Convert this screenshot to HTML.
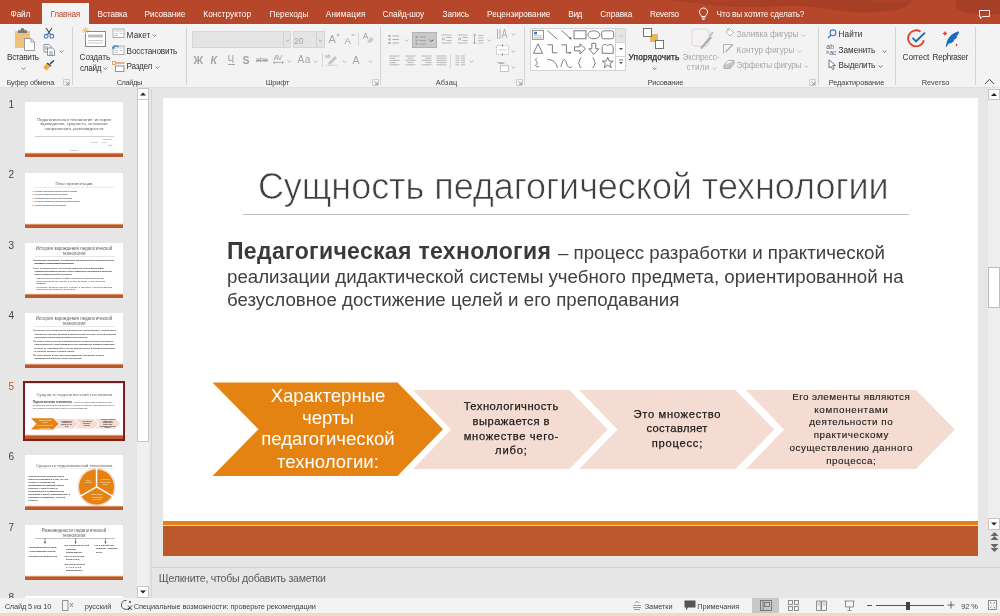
<!DOCTYPE html>
<html><head><meta charset="utf-8">
<style>
*{margin:0;padding:0;box-sizing:border-box}
html,body{width:1000px;height:616px;overflow:hidden;background:#E6E6E6;font-family:"Liberation Sans",sans-serif}
.a{position:absolute}
.t{position:absolute;white-space:nowrap;line-height:1}
#tabs{left:0;top:0;width:1000px;height:24px;background:#B7472A}
.tab{position:absolute;top:9px;font-size:8.6px;color:#fff;white-space:nowrap;line-height:1}
#rib{left:0;top:24px;width:1000px;height:63px;background:#F3F3F3}
.sep{position:absolute;width:1px;background:#D5D5D5}
.lbl{position:absolute;top:54px;font-size:8.6px;color:#444;white-space:nowrap;line-height:1}
.rt{position:absolute;font-size:8.6px;color:#333;white-space:nowrap;line-height:1}
.dis{color:#A6A6A6}
/* slide */
.slide{position:absolute;width:815px;height:459px;background:#fff;overflow:hidden}
.st{position:absolute;white-space:nowrap;line-height:1}
.thumb .sm{-webkit-text-stroke:0.8px currentColor}

</style></head><body><div id="root" style="position:absolute;left:0;top:0;width:1000px;height:616px;overflow:hidden;will-change:transform">
<div class="a" style="left:0;top:0;width:1000px;height:24px;background:#B7472A"></div>
<svg class="a" style="left:0;top:0" width="1000" height="24"><g fill="#9A3A23" opacity="0.55">
<path d="M668,0 H912 C911,8 893,12.5 862,12.5 C842,12.5 826,8 808,6.5 C790,5 770,7.5 745,7 C722,6.5 700,4 668,0 Z"/>
<path d="M957,0 H1000 V14.5 C990,13.5 975,14.5 965,12.5 C956,10 954,4 957,0 Z"/>
</g><path d="M870,0 C875,3 890,4 905,0 Z M708,0 C712,3 725,4 733,0 Z" fill="#B7472A" opacity="0.5"/></svg>
<div class="a" style="left:42px;top:3px;width:47px;height:21px;background:#F3F3F3"></div>
<svg class="a" style="left:698px;top:7px" width="11" height="13" viewBox="0 0 11 13"><path d="M5.5,1 C3,1 1.5,3 1.5,5 C1.5,7 3.2,8 3.5,9.5 L7.5,9.5 C7.8,8 9.5,7 9.5,5 C9.5,3 8,1 5.5,1 Z M3.8,11 L7.2,11 M4.3,12.3 L6.7,12.3" fill="none" stroke="#fff" stroke-width="1"/></svg>

<svg class="a" style="left:978px;top:8.5px" width="13" height="11" viewBox="0 0 13 11"><path d="M1.5,1.5 H11.5 V7.5 H4.5 L2.5,9.8 V7.5 H1.5 Z" fill="none" stroke="#fff" stroke-width="0.9"/></svg>
<div class="a" style="left:0;top:24px;width:1000px;height:63px;background:#F3F3F3"></div>
<div class="a" style="left:0;top:87px;width:1000px;height:1px;background:#E0E0E0"></div>
<div class="a" style="left:72px;top:27px;width:1px;height:58px;background:#D4D4D4"></div>
<div class="a" style="left:186px;top:27px;width:1px;height:58px;background:#D4D4D4"></div>
<div class="a" style="left:380px;top:27px;width:1px;height:58px;background:#D4D4D4"></div>
<div class="a" style="left:524px;top:27px;width:1px;height:58px;background:#D4D4D4"></div>
<div class="a" style="left:818px;top:27px;width:1px;height:58px;background:#D4D4D4"></div>
<div class="a" style="left:895px;top:27px;width:1px;height:58px;background:#D4D4D4"></div>
<div class="a" style="left:975px;top:27px;width:1px;height:58px;background:#D4D4D4"></div>
<svg class="a" style="left:63px;top:79px" width="7" height="7" viewBox="0 0 7 7"><path d="M0.5,0.5 H6.5 V6.5 H0.5 Z" fill="none" stroke="#C4C4C4" stroke-width="0.8"/><path d="M2.5,2.5 L5.5,5.5 M5.5,3 V5.5 H3" fill="none" stroke="#A0A0A0" stroke-width="0.9"/></svg>
<svg class="a" style="left:372px;top:79px" width="7" height="7" viewBox="0 0 7 7"><path d="M0.5,0.5 H6.5 V6.5 H0.5 Z" fill="none" stroke="#C4C4C4" stroke-width="0.8"/><path d="M2.5,2.5 L5.5,5.5 M5.5,3 V5.5 H3" fill="none" stroke="#A0A0A0" stroke-width="0.9"/></svg>
<svg class="a" style="left:516px;top:79px" width="7" height="7" viewBox="0 0 7 7"><path d="M0.5,0.5 H6.5 V6.5 H0.5 Z" fill="none" stroke="#C4C4C4" stroke-width="0.8"/><path d="M2.5,2.5 L5.5,5.5 M5.5,3 V5.5 H3" fill="none" stroke="#A0A0A0" stroke-width="0.9"/></svg>
<svg class="a" style="left:809px;top:79px" width="7" height="7" viewBox="0 0 7 7"><path d="M0.5,0.5 H6.5 V6.5 H0.5 Z" fill="none" stroke="#C4C4C4" stroke-width="0.8"/><path d="M2.5,2.5 L5.5,5.5 M5.5,3 V5.5 H3" fill="none" stroke="#A0A0A0" stroke-width="0.9"/></svg>
<svg class="a" style="left:14px;top:28px" width="22" height="23" viewBox="0 0 22 23">
<rect x="1" y="3" width="15" height="17" rx="1" fill="#EBC47A"/>
<path d="M4,5 V2.2 H6.5 C6.5,0.8 7.2,0.3 8.5,0.3 C9.8,0.3 10.5,0.8 10.5,2.2 H13 V5 Z" fill="#767676"/>
<path d="M10.5,10.5 H17 L20.5,14 V22.5 H10.5 Z" fill="#fff" stroke="#888" stroke-width="0.8"/>
<path d="M17,10.5 V14 H20.5" fill="none" stroke="#888" stroke-width="0.8"/>
</svg>
<svg class="a" style="left:20.5px;top:66.5px" width="5" height="3" viewBox="0 0 5 3"><path d="M0.6,0.6 L2.5,2.4 L4.4,0.6" fill="none" stroke="#666" stroke-width="0.8"/></svg>
<svg class="a" style="left:43px;top:27px" width="12" height="12" viewBox="0 0 12 12">
<path d="M3,1 L7.5,7.5 M9,1 L4.5,7.5" stroke="#444" stroke-width="1.1"/>
<circle cx="3.2" cy="9.3" r="1.9" fill="none" stroke="#3C7CC4" stroke-width="1.1"/><circle cx="8.8" cy="9.3" r="1.9" fill="none" stroke="#3C7CC4" stroke-width="1.1"/>
</svg>
<svg class="a" style="left:43px;top:44px" width="13" height="12" viewBox="0 0 13 12">
<path d="M1,0.5 H6 L8,2.5 V8 H1 Z" fill="#fff" stroke="#777" stroke-width="0.8"/>
<path d="M4.5,4 H9.5 L11.5,6 V11.5 H4.5 Z" fill="#fff" stroke="#777" stroke-width="0.8"/>
<path d="M2,3 H5 M2,5 H4" stroke="#3C7CC4" stroke-width="0.8"/><path d="M6,8 H10 M6,10 H10" stroke="#3C7CC4" stroke-width="0.8"/>
</svg>
<svg class="a" style="left:58.5px;top:49.5px" width="5" height="3" viewBox="0 0 5 3"><path d="M0.6,0.6 L2.5,2.4 L4.4,0.6" fill="none" stroke="#666" stroke-width="0.8"/></svg>
<svg class="a" style="left:42px;top:60px" width="13" height="11" viewBox="0 0 13 11">
<path d="M8,4 L12,0.5" stroke="#444" stroke-width="1.6"/>
<path d="M1,7.5 L5,3 L9,6 L4.5,10.5 Z" fill="#E8B04A"/><path d="M5,3 L9,6" stroke="#444" stroke-width="1.3"/>
</svg>
<svg class="a" style="left:81px;top:26px" width="26" height="22" viewBox="0 0 26 22">
<rect x="4.5" y="5.5" width="20" height="15" fill="#fff" stroke="#8A8A8A" stroke-width="1"/>
<rect x="7" y="8.5" width="15" height="3" fill="#BDBDBD"/><path d="M7,14.5 H22 M7,17 H22" stroke="#C8C8C8" stroke-width="1"/>
<g stroke="#F0C050" stroke-width="0.8"><path d="M4.5,1 V8 M1,4.5 H8 M2,2 L7,7 M7,2 L2,7"/></g>
</svg>
<svg class="a" style="left:103.0px;top:66.5px" width="5" height="3" viewBox="0 0 5 3"><path d="M0.6,0.6 L2.5,2.4 L4.4,0.6" fill="none" stroke="#666" stroke-width="0.8"/></svg>
<svg class="a" style="left:112px;top:28px" width="13" height="11" viewBox="0 0 13 11">
<rect x="1" y="1" width="11" height="8.5" fill="#fff" stroke="#9A9A9A" stroke-width="0.8"/>
<path d="M2.5,3 H10.5 M2.5,5.5 H6 M2.5,7.5 H6 M7.5,5.5 H10.5" stroke="#C8C8C8" stroke-width="1.2"/></svg>
<svg class="a" style="left:151.5px;top:34.0px" width="5" height="3" viewBox="0 0 5 3"><path d="M0.6,0.6 L2.5,2.4 L4.4,0.6" fill="none" stroke="#666" stroke-width="0.8"/></svg>
<svg class="a" style="left:112px;top:45px" width="13" height="11" viewBox="0 0 13 11">
<rect x="1" y="1" width="11" height="8.5" fill="#fff" stroke="#9A9A9A" stroke-width="0.8"/>
<path d="M2.5,3 H10.5 M2.5,5.5 H6 M2.5,7.5 H6 M7.5,5.5 H10.5" stroke="#C8C8C8" stroke-width="1.2"/><path d="M1,3.5 C1.5,0.5 5,0 6.5,2.2" fill="none" stroke="#3C7CC4" stroke-width="1.3"/><path d="M0,2 L1.2,4.5 L3.2,2.8 Z" fill="#3C7CC4"/></svg>
<svg class="a" style="left:112px;top:61px" width="13" height="11" viewBox="0 0 13 11">
<rect x="0.5" y="0.5" width="3" height="3" fill="none" stroke="#E8A13A" stroke-width="0.9"/><path d="M4,2 H12.5" stroke="#E8804A" stroke-width="1.2"/>
<rect x="3.5" y="5" width="8.5" height="5.5" fill="#fff" stroke="#8A8A8A" stroke-width="0.9"/>
</svg>
<svg class="a" style="left:154.5px;top:65.5px" width="5" height="3" viewBox="0 0 5 3"><path d="M0.6,0.6 L2.5,2.4 L4.4,0.6" fill="none" stroke="#666" stroke-width="0.8"/></svg>
<div class="a" style="left:192px;top:31px;width:99px;height:17px;background:#E4E4E4;border:1px solid #D6D6D6"></div>
<div class="a" style="left:283px;top:32px;width:1px;height:15px;background:#D0D0D0"></div>
<svg class="a" style="left:284.5px;top:38.5px" width="5" height="3" viewBox="0 0 5 3"><path d="M0.6,0.6 L2.5,2.4 L4.4,0.6" fill="none" stroke="#A0A0A0" stroke-width="0.8"/></svg>
<div class="a" style="left:293px;top:31px;width:32px;height:17px;background:#E4E4E4;border:1px solid #D6D6D6"></div>
<div class="a" style="left:316px;top:32px;width:1px;height:15px;background:#D0D0D0"></div>
<svg class="a" style="left:317.5px;top:38.5px" width="5" height="3" viewBox="0 0 5 3"><path d="M0.6,0.6 L2.5,2.4 L4.4,0.6" fill="none" stroke="#A0A0A0" stroke-width="0.8"/></svg>
<svg class="a" style="left:335.5px;top:33px" width="4" height="4"><path d="M0.5,2 H3.5 M2,0.5 V3.5" fill="none" stroke="#A4A4A4" stroke-width="0.8"/></svg>
<svg class="a" style="left:350.5px;top:33px" width="4" height="4"><path d="M0.5,2 H3.5" fill="none" stroke="#A4A4A4" stroke-width="0.9"/></svg>
<div class="a" style="left:358px;top:33px;width:1px;height:13px;background:#D8D8D8"></div>
<svg class="a" style="left:362px;top:32px" width="12" height="12" viewBox="0 0 12 12"><path d="M1,7 L3.5,1 L6,7 M2,5 H5" fill="none" stroke="#A4A4A4" stroke-width="0.9"/><path d="M5,10 L9,5 L11.5,7.5 L8.5,11 Z" fill="#C8C8C8"/></svg>
<div class="a" style="left:228px;top:63.5px;width:7px;height:1px;background:#A4A4A4"></div>
<div class="a" style="left:256px;top:59.5px;width:12px;height:1px;background:#A4A4A4"></div>
<svg class="a" style="left:273px;top:60px" width="11" height="5"><path d="M0.5,2.5 H10.5 M2,1 L0.5,2.5 L2,4 M9,1 L10.5,2.5 L9,4" fill="none" stroke="#A4A4A4" stroke-width="0.8"/></svg>
<svg class="a" style="left:286.5px;top:59.5px" width="5" height="3" viewBox="0 0 5 3"><path d="M0.6,0.6 L2.5,2.4 L4.4,0.6" fill="none" stroke="#B0B0B0" stroke-width="0.8"/></svg>
<svg class="a" style="left:312.5px;top:59.5px" width="5" height="3" viewBox="0 0 5 3"><path d="M0.6,0.6 L2.5,2.4 L4.4,0.6" fill="none" stroke="#B0B0B0" stroke-width="0.8"/></svg>
<div class="a" style="left:322px;top:53px;width:1px;height:14px;background:#D8D8D8"></div>
<svg class="a" style="left:325px;top:53px" width="13" height="13" viewBox="0 0 13 13"><text x="0" y="5" font-size="5" fill="#A4A4A4" font-family="Liberation Sans">ab</text><path d="M3,10 L10,3 L12,5 L5,12 Z" fill="#C4C4C4"/><path d="M1,12.3 H12" stroke="#E0C8E0" stroke-width="1"/></svg>
<svg class="a" style="left:341.5px;top:59.5px" width="5" height="3" viewBox="0 0 5 3"><path d="M0.6,0.6 L2.5,2.4 L4.4,0.6" fill="none" stroke="#B0B0B0" stroke-width="0.8"/></svg>
<svg class="a" style="left:367.5px;top:59.5px" width="5" height="3" viewBox="0 0 5 3"><path d="M0.6,0.6 L2.5,2.4 L4.4,0.6" fill="none" stroke="#B0B0B0" stroke-width="0.8"/></svg>
<svg class="a" style="left:388px;top:34px" width="12" height="11"><rect x="0.5" y="1.0" width="2" height="2" fill="#A8A8A8"/><rect x="0.5" y="4.5" width="2" height="2" fill="#A8A8A8"/><rect x="0.5" y="8.0" width="2" height="2" fill="#A8A8A8"/><path d="M4.5,2.0 H11" stroke="#A8A8A8" stroke-width="0.9"/><path d="M4.5,5.5 H11" stroke="#A8A8A8" stroke-width="0.9"/><path d="M4.5,9.0 H11" stroke="#A8A8A8" stroke-width="0.9"/></svg>
<svg class="a" style="left:403.5px;top:38.5px" width="5" height="3" viewBox="0 0 5 3"><path d="M0.6,0.6 L2.5,2.4 L4.4,0.6" fill="none" stroke="#B0B0B0" stroke-width="0.8"/></svg>
<div class="a" style="left:412px;top:32px;width:25px;height:16px;background:#C9C9C9;border:1px solid #B3B3B3"></div>
<svg class="a" style="left:415px;top:35px" width="12" height="11"><rect x="0.5" y="1.0" width="2" height="2" fill="#A0A0A0"/><rect x="0.5" y="4.5" width="2" height="2" fill="#A0A0A0"/><rect x="0.5" y="8.0" width="2" height="2" fill="#A0A0A0"/><path d="M4.5,2.0 H11" stroke="#A0A0A0" stroke-width="0.9"/><path d="M4.5,5.5 H11" stroke="#A0A0A0" stroke-width="0.9"/><path d="M4.5,9.0 H11" stroke="#A0A0A0" stroke-width="0.9"/></svg>
<svg class="a" style="left:428.5px;top:38.5px" width="5" height="3" viewBox="0 0 5 3"><path d="M0.6,0.6 L2.5,2.4 L4.4,0.6" fill="none" stroke="#444" stroke-width="0.8"/></svg>
<svg class="a" style="left:441px;top:34px" width="11" height="11"><path d="M0.5,1 H10.5 M5.5,3.5 H10.5 M5.5,6.5 H10.5 M0.5,9 H10.5" stroke="#B0B0B0" stroke-width="0.9"/><path d="M4,5 L1,5 M2.5,3.5 L1,5 L2.5,6.5" fill="none" stroke="#A8A8A8" stroke-width="0.9"/></svg>
<svg class="a" style="left:457px;top:34px" width="11" height="11"><path d="M0.5,1 H10.5 M5.5,3.5 H10.5 M5.5,6.5 H10.5 M0.5,9 H10.5" stroke="#B0B0B0" stroke-width="0.9"/><path d="M1,5 L4,5 M2.5,3.5 L4,5 L2.5,6.5" fill="none" stroke="#A8A8A8" stroke-width="0.9"/></svg>
<svg class="a" style="left:472px;top:33px" width="12" height="12"><path d="M2.5,1 V11 M1,2.5 L2.5,1 L4,2.5 M1,9.5 L2.5,11 L4,9.5" fill="none" stroke="#A8A8A8" stroke-width="0.9"/><path d="M6,2.5 H11.5 M6,5 H11.5 M6,7.5 H11.5 M6,10 H11.5" stroke="#B8B8B8" stroke-width="0.9"/></svg>
<svg class="a" style="left:486.5px;top:38.5px" width="5" height="3" viewBox="0 0 5 3"><path d="M0.6,0.6 L2.5,2.4 L4.4,0.6" fill="none" stroke="#B0B0B0" stroke-width="0.8"/></svg>
<svg class="a" style="left:496px;top:27px" width="13" height="13"><path d="M1.5,2 V12 M4,2 V12" stroke="#A8A8A8" stroke-width="0.9"/><path d="M6,11 L8.5,2 L11,11 M7,8 H10" fill="none" stroke="#A8A8A8" stroke-width="0.9"/></svg>
<svg class="a" style="left:510.5px;top:32.5px" width="5" height="3" viewBox="0 0 5 3"><path d="M0.6,0.6 L2.5,2.4 L4.4,0.6" fill="none" stroke="#B0B0B0" stroke-width="0.8"/></svg>
<svg class="a" style="left:496px;top:44px" width="13" height="12"><rect x="0.5" y="1.5" width="12" height="9" fill="#fff" stroke="#B8B8B8" stroke-width="0.8" stroke-dasharray="2,1"/><path d="M6.5,0 V3 M6.5,9 V12" stroke="#A8A8A8" stroke-width="1"/><path d="M3,6 H10" stroke="#D0C0D0" stroke-width="1"/></svg>
<svg class="a" style="left:510.5px;top:49.5px" width="5" height="3" viewBox="0 0 5 3"><path d="M0.6,0.6 L2.5,2.4 L4.4,0.6" fill="none" stroke="#B0B0B0" stroke-width="0.8"/></svg>
<svg class="a" style="left:496px;top:61px" width="13" height="11"><path d="M0.5,1 H7 L9,3 H3 Z" fill="#B8B8B8"/><rect x="4.5" y="4.5" width="8" height="6" fill="#fff" stroke="#B8B8B8" stroke-width="0.8"/></svg>
<svg class="a" style="left:510.5px;top:65.5px" width="5" height="3" viewBox="0 0 5 3"><path d="M0.6,0.6 L2.5,2.4 L4.4,0.6" fill="none" stroke="#B0B0B0" stroke-width="0.8"/></svg>
<svg class="a" style="left:389px;top:55px" width="11" height="11"><path d="M0.5,1.0 H10.5" stroke="#B0B0B0" stroke-width="0.9"/><path d="M0.5,3.2 H6.5" stroke="#B0B0B0" stroke-width="0.9"/><path d="M0.5,5.4 H10.5" stroke="#B0B0B0" stroke-width="0.9"/><path d="M0.5,7.6000000000000005 H6.5" stroke="#B0B0B0" stroke-width="0.9"/><path d="M0.5,9.8 H10.5" stroke="#B0B0B0" stroke-width="0.9"/></svg>
<svg class="a" style="left:405px;top:55px" width="11" height="11"><path d="M0.5,1.0 H10.5" stroke="#B0B0B0" stroke-width="0.9"/><path d="M2.5,3.2 H8.5" stroke="#B0B0B0" stroke-width="0.9"/><path d="M0.5,5.4 H10.5" stroke="#B0B0B0" stroke-width="0.9"/><path d="M2.5,7.6000000000000005 H8.5" stroke="#B0B0B0" stroke-width="0.9"/><path d="M0.5,9.8 H10.5" stroke="#B0B0B0" stroke-width="0.9"/></svg>
<svg class="a" style="left:421px;top:55px" width="11" height="11"><path d="M0.5,1.0 H10.5" stroke="#B0B0B0" stroke-width="0.9"/><path d="M4.5,3.2 H10.5" stroke="#B0B0B0" stroke-width="0.9"/><path d="M0.5,5.4 H10.5" stroke="#B0B0B0" stroke-width="0.9"/><path d="M4.5,7.6000000000000005 H10.5" stroke="#B0B0B0" stroke-width="0.9"/><path d="M0.5,9.8 H10.5" stroke="#B0B0B0" stroke-width="0.9"/></svg>
<svg class="a" style="left:436px;top:55px" width="11" height="11"><path d="M0.5,1.0 H10.5" stroke="#B0B0B0" stroke-width="0.9"/><path d="M0.5,3.2 H10.5" stroke="#B0B0B0" stroke-width="0.9"/><path d="M0.5,5.4 H10.5" stroke="#B0B0B0" stroke-width="0.9"/><path d="M0.5,7.6000000000000005 H10.5" stroke="#B0B0B0" stroke-width="0.9"/><path d="M0.5,9.8 H10.5" stroke="#B0B0B0" stroke-width="0.9"/></svg>
<div class="a" style="left:450px;top:54px;width:1px;height:14px;background:#D8D8D8"></div>
<svg class="a" style="left:455px;top:55px" width="11" height="11"><path d="M0.5,1.0 H4.5 M6,1.0 H10" stroke="#B0B0B0" stroke-width="0.9"/><path d="M0.5,3.2 H4.5 M6,3.2 H10" stroke="#B0B0B0" stroke-width="0.9"/><path d="M0.5,5.4 H4.5 M6,5.4 H10" stroke="#B0B0B0" stroke-width="0.9"/><path d="M0.5,7.6000000000000005 H4.5 M6,7.6000000000000005 H10" stroke="#B0B0B0" stroke-width="0.9"/><path d="M0.5,9.8 H4.5 M6,9.8 H10" stroke="#B0B0B0" stroke-width="0.9"/></svg>
<svg class="a" style="left:468.5px;top:59.5px" width="5" height="3" viewBox="0 0 5 3"><path d="M0.6,0.6 L2.5,2.4 L4.4,0.6" fill="none" stroke="#B0B0B0" stroke-width="0.8"/></svg>
<div class="a" style="left:530px;top:28px;width:96px;height:43px;background:#fff;border:1px solid #D4D4D4"></div>
<div class="a" style="left:615px;top:28px;width:11px;height:43px;border-left:1px solid #D4D4D4"></div>
<div class="a" style="left:616px;top:29px;width:9px;height:13px;background:#E6E6E6"></div>
<div class="a" style="left:615px;top:42px;width:11px;height:1px;background:#D4D4D4"></div>
<div class="a" style="left:615px;top:56px;width:11px;height:1px;background:#D4D4D4"></div>
<svg class="a" style="left:616px;top:29px" width="10" height="42"><path d="M3,8 L5,6 L7,8" fill="none" stroke="#BBB" stroke-width="0.8"/><polygon points="3,19 7,19 5,21" fill="#444"/><path d="M3,31 H7" stroke="#555" stroke-width="0.8"/><polygon points="3,33 7,33 5,35" fill="#555"/></svg>
<svg class="a" style="left:0;top:0" width="1000" height="90"><g transform="translate(538,34.8)"><rect x="-5.5" y="-4.5" width="11" height="9" fill="#fff" stroke="#777" stroke-width="0.8"/><rect x="-4" y="-3" width="3" height="2.5" fill="#3C7CC4"/><path d="M-4,1 H4 M-4,3 H4" stroke="#AAA" stroke-width="0.8"/></g><g transform="translate(552.4,34.8)"><path d="M-5,-4.5 L5,4.5" stroke="#5A5A5A" stroke-width="0.8"/></g><g transform="translate(566.4,34.8)"><path d="M-5,-4.5 L5,4.5" stroke="#5A5A5A" stroke-width="0.8"/><polygon points="5,4.5 2.5,4.2 4.6,2" fill="#5A5A5A"/></g><g transform="translate(580,34.8)"><rect x="-6" y="-4" width="12" height="8" fill="none" stroke="#5A5A5A" stroke-width="0.8"/></g><g transform="translate(593.8,34.8)"><ellipse cx="0" cy="0" rx="6" ry="4" fill="none" stroke="#5A5A5A" stroke-width="0.8"/></g><g transform="translate(607.7,34.8)"><rect x="-6" y="-4" width="12" height="8" rx="2" fill="none" stroke="#5A5A5A" stroke-width="0.8"/></g><g transform="translate(538,48.8)"><path d="M0,-5 L4.5,4.5 H-4.5 Z" fill="none" stroke="#5A5A5A" stroke-width="0.8"/></g><g transform="translate(552.4,48.8)"><path d="M-5,-4 H0 V4 H5" fill="none" stroke="#5A5A5A" stroke-width="0.8"/></g><g transform="translate(566.4,48.8)"><path d="M-5,-4 H0 V4 H4" fill="none" stroke="#5A5A5A" stroke-width="0.8"/><polygon points="5,4 3,2.7 3,5.3" fill="#5A5A5A"/></g><g transform="translate(580,48.8)"><path d="M-5.5,-2 H0 V-5 L5.5,0 L0,5 V2 H-5.5 Z" fill="none" stroke="#5A5A5A" stroke-width="0.8"/></g><g transform="translate(593.8,48.8)"><path d="M-2,-5.5 H2 V0 H5 L0,5.5 L-5,0 H-2 Z" fill="none" stroke="#5A5A5A" stroke-width="0.8"/></g><g transform="translate(607.7,48.8)"><path d="M-5.5,-1 C-5.5,-5 -1,-5 0,-3 C1,-5 5.5,-5 5.5,-1 V4.5 H-5.5 Z" fill="none" stroke="#5A5A5A" stroke-width="0.8"/></g><g transform="translate(538,62.8)"><path d="M-1,-5 C-5,-2 2,-1 -2,2 C-4,4 1,5 1,3" fill="none" stroke="#5A5A5A" stroke-width="0.8"/></g><g transform="translate(552.4,62.8)"><path d="M-5,-3 C0,-4 4,0 5,5" fill="none" stroke="#5A5A5A" stroke-width="0.8"/></g><g transform="translate(566.4,62.8)"><path d="M-5.5,4 C-3,-6 -1,-4 0,0 C1,4 3,6 5.5,4" fill="none" stroke="#5A5A5A" stroke-width="0.8"/></g><g transform="translate(580,62.8)"><path d="M1.5,-5 C-1,-5 0,-1 -1.5,0 C0,1 -1,5 1.5,5" fill="none" stroke="#5A5A5A" stroke-width="0.8"/></g><g transform="translate(593.8,62.8)"><path d="M-1.5,-5 C1,-5 0,-1 1.5,0 C0,1 1,5 -1.5,5" fill="none" stroke="#5A5A5A" stroke-width="0.8"/></g><g transform="translate(607.7,62.8)"><path d="M0,-5.5 L1.5,-1.7 L5.5,-1.7 L2.3,0.8 L3.5,4.8 L0,2.4 L-3.5,4.8 L-2.3,0.8 L-5.5,-1.7 L-1.5,-1.7 Z" fill="none" stroke="#5A5A5A" stroke-width="0.8"/></g></svg>
<svg class="a" style="left:643px;top:28px" width="22" height="21" viewBox="0 0 22 21">
<rect x="7" y="6" width="8" height="8" fill="#E8B65A"/>
<rect x="0.5" y="0.5" width="8" height="8" fill="#fff" stroke="#666" stroke-width="0.9"/>
<rect x="12.5" y="12.5" width="8" height="8" fill="#fff" stroke="#666" stroke-width="0.9"/>
</svg>
<svg class="a" style="left:651.5px;top:66.5px" width="5" height="3" viewBox="0 0 5 3"><path d="M0.6,0.6 L2.5,2.4 L4.4,0.6" fill="none" stroke="#555" stroke-width="0.8"/></svg>
<svg class="a" style="left:691px;top:28px" width="23" height="22" viewBox="0 0 23 22">
<rect x="1" y="1" width="17" height="17" rx="3" fill="#F5F1F5" stroke="#D6D6D6" stroke-width="0.9"/>
<path d="M9,20 L19,8 L21,10 L11,21 Z" fill="#B0B0B0"/><path d="M19,8 L22,4" stroke="#C0C0C0" stroke-width="2"/>
</svg>
<svg class="a" style="left:711.5px;top:66.5px" width="5" height="3" viewBox="0 0 5 3"><path d="M0.6,0.6 L2.5,2.4 L4.4,0.6" fill="none" stroke="#B8B8B8" stroke-width="0.8"/></svg>
<svg class="a" style="left:724px;top:27px" width="11" height="11"><path d="M2,5 L5.5,1.5 L9.5,5.5 L6,9 Z" fill="#fff" stroke="#A8A8A8" stroke-width="0.9"/><path d="M4,1 V4" stroke="#A8A8A8" stroke-width="0.9"/></svg>
<svg class="a" style="left:800.5px;top:33.5px" width="5" height="3" viewBox="0 0 5 3"><path d="M0.6,0.6 L2.5,2.4 L4.4,0.6" fill="none" stroke="#B8B8B8" stroke-width="0.8"/></svg>
<svg class="a" style="left:723px;top:43px" width="12" height="11"><path d="M0.5,10.5 V1.5 H9" fill="none" stroke="#A8A8A8" stroke-width="0.9"/><path d="M2.5,9 L10,1.5" stroke="#A8A8A8" stroke-width="1.1"/></svg>
<svg class="a" style="left:796.5px;top:49.5px" width="5" height="3" viewBox="0 0 5 3"><path d="M0.6,0.6 L2.5,2.4 L4.4,0.6" fill="none" stroke="#B8B8B8" stroke-width="0.8"/></svg>
<svg class="a" style="left:723px;top:59px" width="12" height="11"><path d="M1,6 L5,1.5 H11 L7,6 Z" fill="#fff" stroke="#A8A8A8" stroke-width="0.9"/><path d="M1,6 V9.5 H7 L11,5 V1.5 M7,6 V9.5" fill="#C8C8C8" stroke="#A8A8A8" stroke-width="0.9"/></svg>
<svg class="a" style="left:803.5px;top:64.5px" width="5" height="3" viewBox="0 0 5 3"><path d="M0.6,0.6 L2.5,2.4 L4.4,0.6" fill="none" stroke="#B8B8B8" stroke-width="0.8"/></svg>
<svg class="a" style="left:827px;top:29px" width="10" height="10"><circle cx="6" cy="3.8" r="2.9" fill="none" stroke="#3C7CC4" stroke-width="1.1"/><path d="M4,6 L1,9" stroke="#3C7CC4" stroke-width="1.4"/></svg>
<svg class="a" style="left:826px;top:43px" width="13" height="12"><text x="0.3" y="5.8" font-size="7" font-family="Liberation Sans"><tspan fill="#555">a</tspan><tspan fill="#8B4FB0">b</tspan></text><text x="3.2" y="11.6" font-size="7" font-family="Liberation Sans"><tspan fill="#666">a</tspan><tspan fill="#3C7CC4">c</tspan></text><path d="M0.3,8.2 L2.6,9.3 L0.3,10.4" fill="none" stroke="#3C7CC4" stroke-width="0.9"/></svg>
<svg class="a" style="left:881.5px;top:49.5px" width="5" height="3" viewBox="0 0 5 3"><path d="M0.6,0.6 L2.5,2.4 L4.4,0.6" fill="none" stroke="#555" stroke-width="0.8"/></svg>
<svg class="a" style="left:828px;top:59px" width="10" height="11"><path d="M1,0.8 V9 L3,7.3 L4.8,10.5 L6.3,9.7 L4.6,6.6 L7.5,6.5 Z" fill="#fff" stroke="#555" stroke-width="0.8"/></svg>
<svg class="a" style="left:877.5px;top:64.5px" width="5" height="3" viewBox="0 0 5 3"><path d="M0.6,0.6 L2.5,2.4 L4.4,0.6" fill="none" stroke="#555" stroke-width="0.8"/></svg>
<svg class="a" style="left:906px;top:29px" width="20" height="20" viewBox="0 0 20 20">
<path d="M14.5,2.6 A8,8 0 1 0 17.9,11.2" fill="none" stroke="#E0452B" stroke-width="1.9"/>
<path d="M6.5,8.8 L10,12.3 L19,3.6" fill="none" stroke="#1C6BB8" stroke-width="1.9"/>
</svg>
<svg class="a" style="left:940px;top:28px" width="22" height="22" viewBox="0 0 22 22">
<path d="M6,18.5 C6.5,11 10.5,5.5 19,3.2 C19,5.5 18,7 16.5,8 L17.2,8.6 C16.5,10.5 15,11.5 13.5,12 L14.2,12.8 C12.5,14.8 10,15.8 7.6,15.8 Z" fill="#1C6BB8"/>
<path d="M6,18.5 L9.5,13" stroke="#1C6BB8" stroke-width="1.3"/>
<path d="M5,3 L5.9,4.6 L7.5,5.5 L5.9,6.4 L5,8 L4.1,6.4 L2.5,5.5 L4.1,4.6 Z" fill="#E0452B"/>
<path d="M16.6,15.6 L17.7,17 L16.6,18.4 L15.5,17 Z" fill="#E0452B"/>
</svg>
<svg class="a" style="left:984px;top:78px" width="11" height="7"><path d="M1,6 L5.5,1.3 L10,6" fill="none" stroke="#444" stroke-width="1"/></svg>
<div class="a" style="left:988px;top:88px;width:12px;height:442px;background:#EEEEEE"></div>
<div class="a" style="left:988px;top:89px;width:12px;height:11px;background:#fff;border:1px solid #C6C6C6"></div>
<svg class="a" style="left:988px;top:89px" width="12" height="11"><polygon points="3,7 9,7 6,4" fill="#222"/></svg>
<div class="a" style="left:988px;top:267px;width:12px;height:41px;background:#fff;border:1px solid #BDBDBD"></div>
<div class="a" style="left:988px;top:518px;width:12px;height:12px;background:#fff;border:1px solid #C6C6C6"></div>
<svg class="a" style="left:988px;top:518px" width="12" height="12"><polygon points="3,4.5 9,4.5 6,7.5" fill="#222"/></svg>
<svg class="a" style="left:987.5px;top:530px" width="13" height="24"><g fill="#666"><polygon points="2.5,6 6.5,2 10.5,6"/><polygon points="2.5,10 6.5,6 10.5,10"/><polygon points="2.5,14 6.5,18 10.5,14"/><polygon points="2.5,18 6.5,22 10.5,18"/></g></svg>
<div class="a" style="left:152px;top:567px;width:848px;height:1px;background:#D2D2D2"></div>
<div class="a" style="left:0;top:598px;width:1000px;height:15px;background:#F3F3F3"></div>
<div class="a" style="left:0;top:613px;width:1000px;height:3px;background:#F3D8C7"></div>
<svg class="a" style="left:62px;top:600px" width="12" height="11"><path d="M0.5,0.5 H6 V10.5 H0.5 Z" fill="none" stroke="#777" stroke-width="0.8"/><path d="M8,3 L11,7 M11,3 L8,7" stroke="#777" stroke-width="0.8"/></svg>
<svg class="a" style="left:121px;top:599px" width="12" height="12"><path d="M5.5,1.5 A4.5,4.5 0 1 0 9,8" fill="none" stroke="#555" stroke-width="1"/><path d="M7,6.5 L11,11 M11,6.5 L7,11" stroke="#444" stroke-width="1"/><circle cx="9" cy="3" r="1" fill="#444"/></svg>
<svg class="a" style="left:632px;top:600px" width="10" height="11"><path d="M1,5.5 H9 M1,7.5 H9 M2,9.5 H8" stroke="#777" stroke-width="0.7"/><path d="M3,3.3 L5,1.3 L7,3.3" fill="none" stroke="#777" stroke-width="0.8"/></svg>
<svg class="a" style="left:684px;top:600px" width="12" height="11"><path d="M0.5,0.5 H11.5 V7.5 H4 L2,10.5 V7.5 H0.5 Z" fill="#555"/></svg>
<div class="a" style="left:752px;top:598px;width:27px;height:15px;background:#C8C8C8"></div>
<svg class="a" style="left:760px;top:600px" width="12" height="11"><rect x="0.5" y="0.5" width="11" height="10" fill="none" stroke="#666" stroke-width="0.8"/><path d="M3,1 V10" stroke="#666" stroke-width="0.8"/><rect x="4.5" y="2.5" width="5" height="4" fill="none" stroke="#666" stroke-width="0.8"/></svg>
<svg class="a" style="left:788px;top:600px" width="11" height="11"><rect x="0.5" y="0.5" width="4" height="4" fill="none" stroke="#777" stroke-width="0.8"/><rect x="6.5" y="0.5" width="4" height="4" fill="none" stroke="#777" stroke-width="0.8"/><rect x="0.5" y="6.5" width="4" height="4" fill="none" stroke="#777" stroke-width="0.8"/><rect x="6.5" y="6.5" width="4" height="4" fill="none" stroke="#777" stroke-width="0.8"/></svg>
<svg class="a" style="left:816px;top:600px" width="11" height="11"><path d="M0.5,1 H5 V10.5 H0.5 Z M5.5,1 H10.5 V10.5 H5.5 Z" fill="none" stroke="#777" stroke-width="0.8"/><path d="M1.5,3 H4 M1.5,5 H4 M6.5,3 H9.5 M6.5,5 H9.5" stroke="#999" stroke-width="0.6"/></svg>
<svg class="a" style="left:844px;top:600px" width="11" height="11"><path d="M0.5,1 H10.5 M1.5,1 V7 H9.5 V1 M5.5,7 V10 M3.5,10.5 H7.5" fill="none" stroke="#777" stroke-width="0.8"/></svg>
<div class="a" style="left:867px;top:605px;width:5px;height:1px;background:#555"></div>
<div class="a" style="left:876px;top:605px;width:68px;height:1px;background:#555"></div>
<div class="a" style="left:906px;top:602px;width:4px;height:8px;background:#444"></div>
<svg class="a" style="left:947px;top:601px" width="8" height="8"><path d="M0.5,4 H7.5 M4,0.5 V7.5" stroke="#555" stroke-width="0.9"/></svg>
<svg class="a" style="left:988px;top:600px" width="9" height="10"><rect x="0.5" y="0.5" width="8" height="9" fill="none" stroke="#777" stroke-width="0.8"/><path d="M2,2 L3.5,3.5 M7,2 L5.5,3.5 M2,8 L3.5,6.5 M7,8 L5.5,6.5" stroke="#777" stroke-width="0.8"/></svg>
<div class="t" style="left:10.59px;top:10.56px;font-size:8.2px;color:#fff;letter-spacing:-0.134px">Файл</div>
<div class="t" style="left:50.39px;top:10.56px;font-size:8.2px;color:#B7472A;letter-spacing:-0.206px">Главная</div>
<div class="t" style="left:97.59px;top:10.56px;font-size:8.2px;color:#fff;letter-spacing:-0.117px">Вставка</div>
<div class="t" style="left:144.59px;top:10.56px;font-size:8.2px;color:#fff;letter-spacing:-0.062px">Рисование</div>
<div class="t" style="left:203.34px;top:10.56px;font-size:8.2px;color:#fff;letter-spacing:0.105px">Конструктор</div>
<div class="t" style="left:269.59px;top:10.56px;font-size:8.2px;color:#fff;letter-spacing:0.047px">Переходы</div>
<div class="t" style="left:325.84px;top:10.56px;font-size:8.2px;color:#fff;letter-spacing:0.150px">Анимация</div>
<div class="t" style="left:382.59px;top:10.56px;font-size:8.2px;color:#fff;letter-spacing:-0.121px">Слайд-шоу</div>
<div class="t" style="left:442.59px;top:10.56px;font-size:8.2px;color:#fff;letter-spacing:-0.077px">Запись</div>
<div class="t" style="left:487.09px;top:10.56px;font-size:8.2px;color:#fff;letter-spacing:0.000px">Рецензирование</div>
<div class="t" style="left:568.34px;top:10.56px;font-size:8.2px;color:#fff;letter-spacing:-0.412px">Вид</div>
<div class="t" style="left:600.34px;top:10.56px;font-size:8.2px;color:#fff;letter-spacing:-0.023px">Справка</div>
<div class="t" style="left:650.09px;top:10.56px;font-size:8.2px;color:#fff;letter-spacing:-0.252px">Reverso</div>
<div class="t" style="left:716.59px;top:10.56px;font-size:8.2px;color:#fff;letter-spacing:-0.132px">Что вы хотите сделать?</div>
<div class="t" style="left:6.63px;top:79.34px;font-size:7.4px;color:#444;letter-spacing:-0.232px">Буфер обмена</div>
<div class="t" style="left:116.63px;top:79.34px;font-size:7.4px;color:#444;letter-spacing:-0.370px">Слайды</div>
<div class="t" style="left:265.63px;top:79.34px;font-size:7.4px;color:#444;letter-spacing:-0.166px">Шрифт</div>
<div class="t" style="left:435.63px;top:79.34px;font-size:7.4px;color:#444;letter-spacing:0.233px">Абзац</div>
<div class="t" style="left:647.63px;top:79.34px;font-size:7.4px;color:#444;letter-spacing:-0.196px">Рисование</div>
<div class="t" style="left:828.63px;top:79.34px;font-size:7.4px;color:#444;letter-spacing:-0.050px">Редактирование</div>
<div class="t" style="left:921.63px;top:79.34px;font-size:7.4px;color:#444;letter-spacing:0.022px">Reverso</div>
<div class="t" style="left:7.09px;top:54.36px;font-size:8.2px;color:#333;letter-spacing:-0.390px">Вставить</div>
<div class="t" style="left:79.59px;top:54.06px;font-size:8.2px;color:#333;letter-spacing:-0.065px">Создать</div>
<div class="t" style="left:79.99px;top:64.56px;font-size:8.2px;color:#333;letter-spacing:-0.286px">слайд</div>
<div class="t" style="left:126.59px;top:31.56px;font-size:8.2px;color:#333;letter-spacing:0.142px">Макет</div>
<div class="t" style="left:126.59px;top:47.56px;font-size:8.2px;color:#333;letter-spacing:-0.155px">Восстановить</div>
<div class="t" style="left:126.59px;top:63.36px;font-size:8.2px;color:#333;letter-spacing:-0.265px">Раздел</div>
<div class="t" style="left:294.07px;top:36.72px;font-size:8.6px;color:#A8A8A8;letter-spacing:0.012px">20</div>
<div class="t" style="left:328.45px;top:34.49px;font-size:11px;color:#A4A4A4;letter-spacing:0.000px">A</div>
<div class="t" style="left:344.52px;top:35.76px;font-size:9.5px;color:#A4A4A4;letter-spacing:0.000px">A</div>
<div class="t" style="left:193.47px;top:55.11px;font-size:10.5px;color:#A4A4A4;letter-spacing:0.000px;font-weight:bold">Ж</div>
<div class="t" style="left:210.47px;top:55.11px;font-size:10.5px;color:#A4A4A4;letter-spacing:0.000px;font-weight:bold;font-style:italic">К</div>
<div class="t" style="left:227.50px;top:54.53px;font-size:10px;color:#A4A4A4;letter-spacing:0.000px">Ч</div>
<div class="t" style="left:242.47px;top:55.11px;font-size:10.5px;color:#A4A4A4;letter-spacing:0.000px;font-weight:bold">S</div>
<div class="t" style="left:255.60px;top:56.23px;font-size:8px;color:#A4A4A4;letter-spacing:-0.320px">abe</div>
<div class="t" style="left:273.62px;top:53.65px;font-size:7.5px;color:#A4A4A4;letter-spacing:-0.778px">AV</div>
<div class="t" style="left:297.50px;top:55.03px;font-size:10px;color:#A4A4A4;letter-spacing:0.666px">Aa</div>
<div class="t" style="left:352.48px;top:54.91px;font-size:10.5px;color:#A4A4A4;letter-spacing:0.000px">A</div>
<div class="t" style="left:628.59px;top:54.36px;font-size:8.2px;color:#2a2a2a;letter-spacing:0.200px;-webkit-text-stroke:0.25px #2a2a2a">Упорядочить</div>
<div class="t" style="left:682.59px;top:54.36px;font-size:8.2px;color:#A8A8A8;letter-spacing:-0.171px">Экспресс-</div>
<div class="t" style="left:686.59px;top:64.06px;font-size:8.2px;color:#A8A8A8;letter-spacing:0.239px">стили</div>
<div class="t" style="left:736.59px;top:31.06px;font-size:8.2px;color:#A8A8A8;letter-spacing:-0.061px">Заливка фигуры</div>
<div class="t" style="left:736.59px;top:46.56px;font-size:8.2px;color:#A8A8A8;letter-spacing:0.039px">Контур фигуры</div>
<div class="t" style="left:736.59px;top:62.06px;font-size:8.2px;color:#A8A8A8;letter-spacing:-0.269px">Эффекты фигуры</div>
<div class="t" style="left:838.59px;top:31.06px;font-size:8.2px;color:#333;letter-spacing:0.091px">Найти</div>
<div class="t" style="left:838.59px;top:46.56px;font-size:8.2px;color:#333;letter-spacing:-0.008px">Заменить</div>
<div class="t" style="left:838.59px;top:62.06px;font-size:8.2px;color:#333;letter-spacing:-0.149px">Выделить</div>
<div class="t" style="left:902.59px;top:54.36px;font-size:8.2px;color:#333;letter-spacing:-0.018px">Correct</div>
<div class="t" style="left:932.59px;top:54.36px;font-size:8.2px;color:#333;letter-spacing:-0.312px">Rephraser</div>
<div class="t" style="left:158.77px;top:573.23px;font-size:10.6px;color:#595959;letter-spacing:-0.252px">Щелкните, чтобы добавить заметки</div>
<div class="t" style="left:4.63px;top:603.34px;font-size:7.4px;color:#444;letter-spacing:-0.129px">Слайд 5 из 10</div>
<div class="t" style="left:84.63px;top:603.34px;font-size:7.4px;color:#444;letter-spacing:0.022px">русский</div>
<div class="t" style="left:133.63px;top:603.34px;font-size:7.4px;color:#444;letter-spacing:-0.067px">Специальные возможности: проверьте рекомендации</div>
<div class="t" style="left:644.63px;top:603.34px;font-size:7.4px;color:#444;letter-spacing:-0.036px">Заметки</div>
<div class="t" style="left:697.23px;top:603.34px;font-size:7.4px;color:#444;letter-spacing:-0.067px">Примечания</div>
<div class="t" style="left:961.23px;top:603.34px;font-size:7.4px;color:#444;letter-spacing:-0.064px">92 %</div>

<div id="left" class="a" style="left:0;top:87px;width:151px;height:511px;overflow:hidden"><div class="a" style="left:0;top:-87px;width:151px;height:616px"><div class="t" style="left:8.5px;top:99.5px;font-size:10px;color:#444">1</div>
<div class="a" style="left:25px;top:102px;width:98px;height:55px;overflow:hidden;background:#fff"><div class="slide thumb" style="left:0;top:0;transform:scale(0.12024539877300613);transform-origin:0 0"><div class="st" style="left:7.0px;width:800px;text-align:center;top:126.53px;font-size:36px;color:#5a5a5a">Педагогическая технология: история</div><div class="st" style="left:7.0px;width:800px;text-align:center;top:164.03px;font-size:36px;color:#5a5a5a">зарождения, сущность, основные</div><div class="st" style="left:7.0px;width:800px;text-align:center;top:201.03px;font-size:36px;color:#5a5a5a">направления, разновидности</div><div class="a" style="left:83px;top:284px;width:657px;height:7px;background:#C8C8C8"></div><div class="st" style="left:400px;width:323px;text-align:right;top:309.0px;font-size:13px;color:#666">Выполнила:</div><div class="st" style="left:400px;width:323px;text-align:right;top:330.0px;font-size:13px;color:#666">студентка ___ группы ______</div><div class="st" style="left:400px;width:323px;text-align:right;top:351.0px;font-size:13px;color:#666">ФИО</div><div class="st" style="left:7.0px;width:800px;text-align:center;top:393.84px;font-size:12px;color:#777">Москва 2023</div><div class="a" style="left:0;top:423px;width:815px;height:4px;background:#E48312"></div><div class="a" style="left:0;top:428px;width:815px;height:31px;background:#BD582C"></div></div></div>
<div class="t" style="left:8.5px;top:170.0px;font-size:10px;color:#444">2</div>
<div class="a" style="left:25px;top:172.5px;width:98px;height:55px;overflow:hidden;background:#fff"><div class="slide thumb" style="left:0;top:0;transform:scale(0.12024539877300613);transform-origin:0 0"><div class="st" style="left:7.0px;width:800px;text-align:center;top:71.53px;font-size:36px;color:#5a5a5a">План презентации</div><div class="a" style="left:80px;top:116px;width:666px;height:2px;background:#9A9A9A"></div><div class="st sm" style="left:62px;top:143.15px;font-size:14px;color:#E48312">1.</div><div class="st sm" style="left:82px;top:141.88px;font-size:15.5px;color:#808080">История зарождения педагогической технологии</div><div class="st sm" style="left:62px;top:172.15px;font-size:14px;color:#E48312">2.</div><div class="st sm" style="left:82px;top:170.88px;font-size:15.5px;color:#808080">Сущность педагогической технологии</div><div class="st sm" style="left:62px;top:201.15px;font-size:14px;color:#E48312">3.</div><div class="st sm" style="left:82px;top:199.88px;font-size:15.5px;color:#808080">Разновидности педагогической технологии</div><div class="st sm" style="left:62px;top:230.15px;font-size:14px;color:#E48312">4.</div><div class="st sm" style="left:82px;top:228.88px;font-size:15.5px;color:#808080">Основные направления педагогической технологии</div><div class="st sm" style="left:62px;top:263.15px;font-size:14px;color:#E48312">5.</div><div class="st sm" style="left:82px;top:261.88px;font-size:15.5px;color:#808080">Модели педагогической технологии</div><div class="a" style="left:0;top:423px;width:815px;height:4px;background:#E48312"></div><div class="a" style="left:0;top:428px;width:815px;height:31px;background:#BD582C"></div></div></div>
<div class="t" style="left:8.5px;top:240.5px;font-size:10px;color:#444">3</div>
<div class="a" style="left:25px;top:243px;width:98px;height:55px;overflow:hidden;background:#fff"><div class="slide thumb" style="left:0;top:0;transform:scale(0.12024539877300613);transform-origin:0 0"><div class="st" style="left:7.0px;width:800px;text-align:center;top:28.68px;font-size:37px;color:#5a5a5a">История зарождения педагогической</div><div class="st" style="left:7.0px;width:800px;text-align:center;top:68.68px;font-size:37px;color:#5a5a5a">технологии</div><div class="a" style="left:80px;top:112px;width:666px;height:2px;background:#9A9A9A"></div><div class="a" style="left:66px;top:137.5px;width:12px;height:12px;background:#E48312;opacity:.7"></div><div class="st sm" style="left:80px;top:136.26px;font-size:18px;color:#555;letter-spacing:0.28px">Педагогики утверждают, что сама идея педагогической технологии возникла</div><div class="st sm" style="left:80px;top:161.26px;font-size:18px;color:#555;letter-spacing:-2.80px">в преддверии XX столетия в рамках учебного процесса.</div><div class="a" style="left:66px;top:204px;width:12px;height:12px;background:#E48312;opacity:.7"></div><div class="st sm" style="left:80px;top:202.76px;font-size:18px;color:#555;letter-spacing:1.35px">Эта, в особенности, технология педагогическая философия</div><div class="st sm" style="left:80px;top:227.76px;font-size:18px;color:#555;letter-spacing:-0.46px">современного времени в многих учебных заведениях и методических процессах</div><div class="st sm" style="left:80px;top:252.76px;font-size:18px;color:#555;letter-spacing:0.58px">своего педагогической технологии.</div><div class="st sm" style="left:95px;top:284.3px;font-size:15px;color:#707070;letter-spacing:1.78px">Педагогический процесс в сфере советского образования многих</div><div class="st sm" style="left:95px;top:309.3px;font-size:15px;color:#707070;letter-spacing:3.27px">целенаправленных целей в новых методах и технологиях</div><div class="st sm" style="left:95px;top:326.3px;font-size:15px;color:#707070;letter-spacing:0.03px">педагогики.</div><div class="st sm" style="left:95px;top:359.3px;font-size:15px;color:#707070;letter-spacing:3.90px">Развитие педагогических теорий и методик способствовали</div><div class="st sm" style="left:95px;top:380.3px;font-size:15px;color:#707070;letter-spacing:3.83px">развитию технологии обучения.</div><div class="a" style="left:0;top:423px;width:815px;height:4px;background:#E48312"></div><div class="a" style="left:0;top:428px;width:815px;height:31px;background:#BD582C"></div></div></div>
<div class="t" style="left:8.5px;top:310.5px;font-size:10px;color:#444">4</div>
<div class="a" style="left:25px;top:313px;width:98px;height:55px;overflow:hidden;background:#fff"><div class="slide thumb" style="left:0;top:0;transform:scale(0.12024539877300613);transform-origin:0 0"><div class="st" style="left:7.0px;width:800px;text-align:center;top:28.68px;font-size:37px;color:#5a5a5a">История зарождения педагогической</div><div class="st" style="left:7.0px;width:800px;text-align:center;top:68.68px;font-size:37px;color:#5a5a5a">технологии</div><div class="a" style="left:80px;top:114px;width:666px;height:2px;background:#9A9A9A"></div><div class="a" style="left:66px;top:137px;width:12px;height:12px;background:#E48312;opacity:.7"></div><div class="st sm" style="left:80px;top:135.76px;font-size:18px;color:#555;letter-spacing:1.83px">Постепенно в педагогическом процессе образовались, выделились</div><div class="st sm" style="left:80px;top:165.76px;font-size:18px;color:#555;letter-spacing:1.23px">отдельные системы методов педагогической техники. Из этой практики</div><div class="st sm" style="left:80px;top:190.76px;font-size:18px;color:#555;letter-spacing:1.00px">педагогика использовала термин «технология».</div><div class="a" style="left:66px;top:225px;width:12px;height:12px;background:#E48312;opacity:.7"></div><div class="st sm" style="left:80px;top:223.76px;font-size:18px;color:#555;letter-spacing:1.18px">В 1970-е годы в России разрабатывается педагогическая технология</div><div class="st sm" style="left:80px;top:252.76px;font-size:18px;color:#555;letter-spacing:0.63px">организационно и целенаправленно как направления развития дидактики.</div><div class="st sm" style="left:80px;top:281.76px;font-size:18px;color:#555;letter-spacing:1.59px">Многие из направлений и техник методических подходов проникали</div><div class="st sm" style="left:80px;top:306.76px;font-size:18px;color:#555;letter-spacing:1.12px">в учебный процесс в нашей стране.</div><div class="a" style="left:66px;top:341px;width:12px;height:12px;background:#E48312;opacity:.7"></div><div class="st sm" style="left:80px;top:339.76px;font-size:18px;color:#555;letter-spacing:1.68px">В наше время вновь актуализировались проблемы поиска</div><div class="st sm" style="left:80px;top:368.76px;font-size:18px;color:#555;letter-spacing:1.24px">оптимальной педагогической технологии.</div><div class="a" style="left:0;top:423px;width:815px;height:4px;background:#E48312"></div><div class="a" style="left:0;top:428px;width:815px;height:31px;background:#BD582C"></div></div></div>
<div class="t" style="left:8.5px;top:381.5px;font-size:10px;color:#D24726">5</div>
<div class="a" style="left:23px;top:381px;width:102px;height:60px;border:2px solid #7F1D1D"></div>
<div class="a" style="left:25px;top:384px;width:98px;height:55px;overflow:hidden;background:#fff"><div class="slide thumb" style="left:0;top:0;transform:scale(0.12024539877300613);transform-origin:0 0"><div class="st" style="left:94.9px;top:71.83px;font-size:36px;color:#404040;letter-spacing:-0.05px;-webkit-text-stroke:0.7px #fff">Сущность педагогической технологии</div>
<div class="a" style="left:80px;top:116px;width:666px;height:1px;background:#BFBFBF"></div>
<div class="st" style="left:64px;top:142.83px;font-size:23px;font-weight:bold;color:#3a3a3a;letter-spacing:0.33px">Педагогическая технология</div>
<div class="st" style="left:395px;top:146.67px;font-size:18.7px;color:#404040">– процесс разработки и практической</div>
<div class="st" style="left:64px;top:170.17px;font-size:18.7px;color:#404040">реализации дидактической системы учебного предмета, ориентированной на</div>
<div class="st" style="left:64px;top:193.67px;font-size:18.7px;color:#404040">безусловное достижение целей и его преподавания</div>
<svg class="a" style="left:0;top:0" width="815" height="459" viewBox="0 0 815 459">
<polygon fill="#E48312" points="49.5,284.5 234.5,284.5 280,331.2 234.5,378 49.5,378 95.5,331.2"/>
<polygon fill="#F5DCD3" points="250,292 406.5,292 444.6,331.5 406.5,371 250,371 288,331.5"/>
<polygon fill="#F5DCD3" points="416.2,292 572.4,292 611.4,331.5 572.4,371 416.2,371 454.4,331.5"/>
<polygon fill="#F5DCD3" points="583,292 753,292 792,331.5 753,371 583,371 621.1,331.5"/>
<rect x="0" y="423" width="815" height="4" fill="#E48312"/>
<rect x="0" y="427" width="815" height="1" fill="#F3CDB5"/>
<rect x="0" y="428" width="815" height="31" fill="#BD582C"/>
</svg>
<div class="st" style="left:-35px;width:400px;text-align:center;top:289.26px;font-size:18.6px;color:#fff;letter-spacing:0.000px;text-indent:0.000px">Характерные</div>
<div class="st" style="left:-35px;width:400px;text-align:center;top:311.26px;font-size:18.6px;color:#fff;letter-spacing:0.000px;text-indent:0.000px">черты</div>
<div class="st" style="left:-35px;width:400px;text-align:center;top:332.76px;font-size:18.6px;color:#fff;letter-spacing:0.000px;text-indent:0.000px">педагогической</div>
<div class="st" style="left:-35px;width:400px;text-align:center;top:355.76px;font-size:18.6px;color:#fff;letter-spacing:0.000px;text-indent:0.000px">технологии:</div>
<div class="st" style="left:148px;width:400px;text-align:center;top:303.32px;font-size:11.2px;color:#1a1a1a;letter-spacing:0.477px;text-indent:0.477px;-webkit-text-stroke:0.25px #1a1a1a">Технологичность</div>
<div class="st" style="left:148px;width:400px;text-align:center;top:318.02px;font-size:11.2px;color:#1a1a1a;letter-spacing:0.483px;text-indent:0.483px;-webkit-text-stroke:0.25px #1a1a1a">выражается в</div>
<div class="st" style="left:148px;width:400px;text-align:center;top:333.02px;font-size:11.2px;color:#1a1a1a;letter-spacing:0.659px;text-indent:0.659px;-webkit-text-stroke:0.25px #1a1a1a">множестве чего-</div>
<div class="st" style="left:148px;width:400px;text-align:center;top:347.52px;font-size:11.2px;color:#1a1a1a;letter-spacing:0.846px;text-indent:0.846px;-webkit-text-stroke:0.25px #1a1a1a">либо;</div>
<div class="st" style="left:314px;width:400px;text-align:center;top:311.02px;font-size:11.2px;color:#1a1a1a;letter-spacing:0.674px;text-indent:0.674px;-webkit-text-stroke:0.25px #1a1a1a">Это множество</div>
<div class="st" style="left:314px;width:400px;text-align:center;top:325.72px;font-size:11.2px;color:#1a1a1a;letter-spacing:0.332px;text-indent:0.332px;-webkit-text-stroke:0.25px #1a1a1a">составляет</div>
<div class="st" style="left:314px;width:400px;text-align:center;top:340.42px;font-size:11.2px;color:#1a1a1a;letter-spacing:0.741px;text-indent:0.741px;-webkit-text-stroke:0.25px #1a1a1a">процесс;</div>
<div class="st" style="left:488px;width:400px;text-align:center;top:293.92px;font-size:9.9px;color:#1a1a1a;letter-spacing:0.392px;text-indent:0.392px;-webkit-text-stroke:0.12px #1a1a1a">Его элементы являются</div>
<div class="st" style="left:488px;width:400px;text-align:center;top:306.92px;font-size:9.9px;color:#1a1a1a;letter-spacing:0.675px;text-indent:0.675px;-webkit-text-stroke:0.12px #1a1a1a">компонентами</div>
<div class="st" style="left:488px;width:400px;text-align:center;top:319.82px;font-size:9.9px;color:#1a1a1a;letter-spacing:0.479px;text-indent:0.479px;-webkit-text-stroke:0.12px #1a1a1a">деятельности по</div>
<div class="st" style="left:488px;width:400px;text-align:center;top:332.82px;font-size:9.9px;color:#1a1a1a;letter-spacing:0.547px;text-indent:0.547px;-webkit-text-stroke:0.12px #1a1a1a">практическому</div>
<div class="st" style="left:488px;width:400px;text-align:center;top:345.72px;font-size:9.9px;color:#1a1a1a;letter-spacing:0.542px;text-indent:0.542px;-webkit-text-stroke:0.12px #1a1a1a">осуществлению данного</div>
<div class="st" style="left:488px;width:400px;text-align:center;top:358.72px;font-size:9.9px;color:#1a1a1a;letter-spacing:0.502px;text-indent:0.502px;-webkit-text-stroke:0.12px #1a1a1a">процесса;</div></div></div>
<div class="t" style="left:8.5px;top:452.0px;font-size:10px;color:#444">6</div>
<div class="a" style="left:25px;top:454.5px;width:98px;height:55px;overflow:hidden;background:#fff"><div class="slide thumb" style="left:0;top:0;transform:scale(0.12024539877300613);transform-origin:0 0"><div class="st" style="left:7.0px;width:800px;text-align:center;top:71.53px;font-size:36px;color:#5a5a5a">Сущность педагогической технологии</div><div class="a" style="left:80px;top:114px;width:666px;height:2px;background:#BBBBBB"></div><div class="st sm" style="left:29px;top:170.3px;font-size:15px;color:#4a4a4a;letter-spacing:2.01px">Технологичность педагогического</div><div class="st sm" style="left:29px;top:195.3px;font-size:15px;color:#4a4a4a;letter-spacing:2.21px">процесса выражается в том, что она</div><div class="st sm" style="left:29px;top:220.3px;font-size:15px;color:#4a4a4a;letter-spacing:1.95px">состоит из определенной</div><div class="st sm" style="left:29px;top:245.3px;font-size:15px;color:#4a4a4a;letter-spacing:0.30px">последовательности действий учителя в</div><div class="st sm" style="left:29px;top:270.3px;font-size:15px;color:#4a4a4a;letter-spacing:2.36px">развитии о одной стороны,</div><div class="st sm" style="left:29px;top:295.3px;font-size:15px;color:#4a4a4a;letter-spacing:1.84px">характеристики и педагогического</div><div class="st sm" style="left:29px;top:320.3px;font-size:15px;color:#4a4a4a;letter-spacing:1.53px">потенциала в другой, взаимосвязанных в</div><div class="st sm" style="left:29px;top:345.3px;font-size:15px;color:#4a4a4a;letter-spacing:1.27px">совокупных составляющих, с третьей</div><div class="st sm" style="left:29px;top:370.3px;font-size:15px;color:#4a4a4a;letter-spacing:2.36px">стороны.</div><svg class="a" style="left:0;top:0" width="815" height="459"><circle cx="595" cy="266" r="160" fill="#F5DCD3"/><circle cx="595" cy="266" r="146" fill="#E48312"/><g stroke="#fff" stroke-width="12"><line x1="595" y1="266" x2="595" y2="100"/><line x1="595" y1="266" x2="451" y2="349"/><line x1="595" y1="266" x2="739" y2="349"/></g></svg><div class="st" style="left:425.0px;width:200px;text-align:center;top:204.84px;font-size:12px;color:#fff">Логика</div><div class="st" style="left:425.0px;width:200px;text-align:center;top:221.84px;font-size:12px;color:#fff">действий</div><div class="st" style="left:568.0px;width:200px;text-align:center;top:194.84px;font-size:12px;color:#fff">деятельность</div><div class="st" style="left:568.0px;width:200px;text-align:center;top:221.84px;font-size:12px;color:#fff">педагогический</div><div class="st" style="left:568.0px;width:200px;text-align:center;top:241.84px;font-size:12px;color:#fff">процесс</div><div class="st" style="left:497.0px;width:200px;text-align:center;top:325.84px;font-size:12px;color:#fff">взаимодействие</div><div class="st" style="left:497.0px;width:200px;text-align:center;top:345.84px;font-size:12px;color:#fff">с педагогической</div><div class="st" style="left:497.0px;width:200px;text-align:center;top:365.84px;font-size:12px;color:#fff">технологией</div><div class="a" style="left:0;top:423px;width:815px;height:4px;background:#E48312"></div><div class="a" style="left:0;top:428px;width:815px;height:31px;background:#BD582C"></div></div></div>
<div class="t" style="left:8.5px;top:522.5px;font-size:10px;color:#444">7</div>
<div class="a" style="left:25px;top:525px;width:98px;height:55px;overflow:hidden;background:#fff"><div class="slide thumb" style="left:0;top:0;transform:scale(0.12024539877300613);transform-origin:0 0"><div class="st" style="left:7.0px;width:800px;text-align:center;top:30.68px;font-size:37px;color:#5a5a5a">Разновидности педагогической</div><div class="st" style="left:7.0px;width:800px;text-align:center;top:68.68px;font-size:37px;color:#5a5a5a">технологии</div><div class="a" style="left:83px;top:111px;width:665px;height:3px;background:#555"></div><svg class="a" style="left:0;top:0" width="815" height="459"><g stroke="#333" stroke-width="4" fill="#333"><line x1="166" y1="112" x2="166" y2="148"/><polygon points="158,140 174,140 166,156" stroke="none"/><line x1="420" y1="112" x2="420" y2="148"/><polygon points="412,140 428,140 420,156" stroke="none"/><line x1="669" y1="112" x2="669" y2="148"/><polygon points="661,140 677,140 669,156" stroke="none"/></g></svg><div class="st sm" style="left:29px;top:174.76px;font-size:18px;color:#404040;letter-spacing:2.51px">•Общепедагогические;</div><div class="st sm" style="left:29px;top:211.76px;font-size:18px;color:#404040;letter-spacing:2.27px">•Частнометодические;</div><div class="st sm" style="left:29px;top:249.76px;font-size:18px;color:#404040;letter-spacing:2.15px">•Локальные,модульные.</div><div class="st sm" style="left:324px;top:161.76px;font-size:18px;color:#404040;letter-spacing:2.62px">•По педагогической</div><div class="st sm" style="left:341px;top:191.76px;font-size:18px;color:#404040;letter-spacing:2.42px">системе</div><div class="st sm" style="left:341px;top:220.76px;font-size:18px;color:#404040;letter-spacing:2.24px">образования;</div><div class="st sm" style="left:324px;top:249.76px;font-size:18px;color:#404040;letter-spacing:3.67px">•По субъектам</div><div class="st sm" style="left:341px;top:278.76px;font-size:18px;color:#404040;letter-spacing:4.07px">редакции;</div><div class="st sm" style="left:324px;top:315.76px;font-size:18px;color:#404040;letter-spacing:2.57px">•По целостности</div><div class="st sm" style="left:341px;top:340.76px;font-size:18px;color:#404040;letter-spacing:9.41px">учебной</div><div class="st sm" style="left:341px;top:365.76px;font-size:18px;color:#404040;letter-spacing:2.24px">образования;</div><div class="st sm" style="left:574px;top:157.76px;font-size:18px;color:#404040;letter-spacing:1.60px">•На учебный год,</div><div class="st sm" style="left:591px;top:186.76px;font-size:18px;color:#404040;letter-spacing:1.69px">семестр, четверть,</div><div class="st sm" style="left:591px;top:216.76px;font-size:18px;color:#404040;letter-spacing:3.82px">урок.</div><div class="a" style="left:0;top:423px;width:815px;height:4px;background:#E48312"></div><div class="a" style="left:0;top:428px;width:815px;height:31px;background:#BD582C"></div></div></div>
<div class="t" style="left:8.5px;top:593.0px;font-size:10px;color:#444">8</div>
<div class="a" style="left:25px;top:595.5px;width:98px;height:55px;overflow:hidden;background:#fff"><div class="slide thumb" style="left:0;top:0;transform:scale(0.12024539877300613);transform-origin:0 0"></div></div></div></div>
<div class="a" style="left:137px;top:88px;width:12px;height:510px;background:#F0F0F0"></div>
<div class="a" style="left:137px;top:99px;width:12px;height:343px;background:#fff;border:1px solid #C6C6C6"></div>
<div class="a" style="left:137px;top:88px;width:12px;height:12px;background:#fff;border:1px solid #C6C6C6"></div>
<div class="a" style="left:137px;top:586px;width:12px;height:12px;background:#fff;border:1px solid #C6C6C6"></div>
<svg class="a" style="left:137px;top:88px" width="12" height="12"><polygon points="3,7.5 9,7.5 6,4.5" fill="#222"/></svg>
<svg class="a" style="left:137px;top:586px" width="12" height="12"><polygon points="3,4.5 9,4.5 6,7.5" fill="#222"/></svg>
<div class="a" style="left:151px;top:89px;width:1px;height:509px;background:#D6D6D6"></div>

<div class="slide" id="main" style="left:163px;top:97.6px;height:458.4px">
<div class="st" style="left:94.9px;top:71.83px;font-size:36px;color:#404040;letter-spacing:-0.05px;-webkit-text-stroke:0.7px #fff">Сущность педагогической технологии</div>
<div class="a" style="left:80px;top:116px;width:666px;height:1px;background:#BFBFBF"></div>
<div class="st" style="left:64px;top:142.83px;font-size:23px;font-weight:bold;color:#3a3a3a;letter-spacing:0.33px">Педагогическая технология</div>
<div class="st" style="left:395px;top:146.67px;font-size:18.7px;color:#404040">– процесс разработки и практической</div>
<div class="st" style="left:64px;top:170.17px;font-size:18.7px;color:#404040">реализации дидактической системы учебного предмета, ориентированной на</div>
<div class="st" style="left:64px;top:193.67px;font-size:18.7px;color:#404040">безусловное достижение целей и его преподавания</div>
<svg class="a" style="left:0;top:0" width="815" height="459" viewBox="0 0 815 459">
<polygon fill="#E48312" points="49.5,284.5 234.5,284.5 280,331.2 234.5,378 49.5,378 95.5,331.2"/>
<polygon fill="#F5DCD3" points="250,292 406.5,292 444.6,331.5 406.5,371 250,371 288,331.5"/>
<polygon fill="#F5DCD3" points="416.2,292 572.4,292 611.4,331.5 572.4,371 416.2,371 454.4,331.5"/>
<polygon fill="#F5DCD3" points="583,292 753,292 792,331.5 753,371 583,371 621.1,331.5"/>
<rect x="0" y="423" width="815" height="4" fill="#E48312"/>
<rect x="0" y="427" width="815" height="1" fill="#F3CDB5"/>
<rect x="0" y="428" width="815" height="31" fill="#BD582C"/>
</svg>
<div class="st" style="left:-35px;width:400px;text-align:center;top:289.26px;font-size:18.6px;color:#fff;letter-spacing:0.000px;text-indent:0.000px">Характерные</div>
<div class="st" style="left:-35px;width:400px;text-align:center;top:311.26px;font-size:18.6px;color:#fff;letter-spacing:0.000px;text-indent:0.000px">черты</div>
<div class="st" style="left:-35px;width:400px;text-align:center;top:332.76px;font-size:18.6px;color:#fff;letter-spacing:0.000px;text-indent:0.000px">педагогической</div>
<div class="st" style="left:-35px;width:400px;text-align:center;top:355.76px;font-size:18.6px;color:#fff;letter-spacing:0.000px;text-indent:0.000px">технологии:</div>
<div class="st" style="left:148px;width:400px;text-align:center;top:303.32px;font-size:11.2px;color:#1a1a1a;letter-spacing:0.477px;text-indent:0.477px;-webkit-text-stroke:0.25px #1a1a1a">Технологичность</div>
<div class="st" style="left:148px;width:400px;text-align:center;top:318.02px;font-size:11.2px;color:#1a1a1a;letter-spacing:0.483px;text-indent:0.483px;-webkit-text-stroke:0.25px #1a1a1a">выражается в</div>
<div class="st" style="left:148px;width:400px;text-align:center;top:333.02px;font-size:11.2px;color:#1a1a1a;letter-spacing:0.659px;text-indent:0.659px;-webkit-text-stroke:0.25px #1a1a1a">множестве чего-</div>
<div class="st" style="left:148px;width:400px;text-align:center;top:347.52px;font-size:11.2px;color:#1a1a1a;letter-spacing:0.846px;text-indent:0.846px;-webkit-text-stroke:0.25px #1a1a1a">либо;</div>
<div class="st" style="left:314px;width:400px;text-align:center;top:311.02px;font-size:11.2px;color:#1a1a1a;letter-spacing:0.674px;text-indent:0.674px;-webkit-text-stroke:0.25px #1a1a1a">Это множество</div>
<div class="st" style="left:314px;width:400px;text-align:center;top:325.72px;font-size:11.2px;color:#1a1a1a;letter-spacing:0.332px;text-indent:0.332px;-webkit-text-stroke:0.25px #1a1a1a">составляет</div>
<div class="st" style="left:314px;width:400px;text-align:center;top:340.42px;font-size:11.2px;color:#1a1a1a;letter-spacing:0.741px;text-indent:0.741px;-webkit-text-stroke:0.25px #1a1a1a">процесс;</div>
<div class="st" style="left:488px;width:400px;text-align:center;top:293.92px;font-size:9.9px;color:#1a1a1a;letter-spacing:0.392px;text-indent:0.392px;-webkit-text-stroke:0.12px #1a1a1a">Его элементы являются</div>
<div class="st" style="left:488px;width:400px;text-align:center;top:306.92px;font-size:9.9px;color:#1a1a1a;letter-spacing:0.675px;text-indent:0.675px;-webkit-text-stroke:0.12px #1a1a1a">компонентами</div>
<div class="st" style="left:488px;width:400px;text-align:center;top:319.82px;font-size:9.9px;color:#1a1a1a;letter-spacing:0.479px;text-indent:0.479px;-webkit-text-stroke:0.12px #1a1a1a">деятельности по</div>
<div class="st" style="left:488px;width:400px;text-align:center;top:332.82px;font-size:9.9px;color:#1a1a1a;letter-spacing:0.547px;text-indent:0.547px;-webkit-text-stroke:0.12px #1a1a1a">практическому</div>
<div class="st" style="left:488px;width:400px;text-align:center;top:345.72px;font-size:9.9px;color:#1a1a1a;letter-spacing:0.542px;text-indent:0.542px;-webkit-text-stroke:0.12px #1a1a1a">осуществлению данного</div>
<div class="st" style="left:488px;width:400px;text-align:center;top:358.72px;font-size:9.9px;color:#1a1a1a;letter-spacing:0.502px;text-indent:0.502px;-webkit-text-stroke:0.12px #1a1a1a">процесса;</div>
</div>


</div></body></html>
